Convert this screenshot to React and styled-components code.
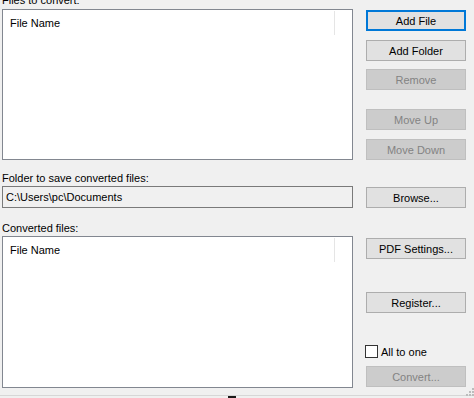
import React from "react";
import styled, { createGlobalStyle } from "styled-components";

const Global = createGlobalStyle`
  html, body { margin: 0; padding: 0; background: #f0f0f0; }
  body { font-family: "Liberation Sans", Arial, sans-serif; font-size: 11px; color: #000; }
`;

const Root = styled.div`
  position: relative;
  width: 474px;
  height: 398px;
  overflow: hidden;
  display: flex;
  flex-direction: column;
  background: #f0f0f0;
`;

const Main = styled.div`
  flex: 1;
  display: flex;
  gap: 13px;
  padding-left: 2px;
`;

const LeftCol = styled.div`
  width: 351px;
  display: flex;
  flex-direction: column;
`;

const RightCol = styled.div`
  width: 100px;
  display: flex;
  flex-direction: column;
`;

const Label = styled.div`
  height: 13px;
  line-height: 13px;
  margin-top: ${(p) => p.$mt}px;
  white-space: nowrap;
`;

const ListBox = styled.div`
  box-sizing: border-box;
  height: ${(p) => p.$h}px;
  margin-top: ${(p) => p.$mt}px;
  background: #fff;
  border: 1px solid #828790;
  padding-top: 1px;
`;

const Header = styled.div`
  display: flex;
  height: 24px;
`;

const HeaderCell = styled.div`
  box-sizing: border-box;
  width: 332px;
  height: 24px;
  line-height: 24px;
  padding-left: 7px;
  border-right: 1px solid #e5e5e5;
`;

const TextBox = styled.div`
  box-sizing: border-box;
  height: 22px;
  margin-top: ${(p) => p.$mt}px;
  border: 1px solid #7a7a7a;
  background: #f0f0f0;
  padding-left: 3px;
  line-height: 20px;
`;

const Button = styled.button`
  box-sizing: border-box;
  width: 100px;
  height: 21px;
  margin: ${(p) => p.$mt}px 0 0 0;
  padding: 0;
  font-family: "Liberation Sans", Arial, sans-serif;
  font-size: 11px;
  color: ${(p) => (p.disabled ? "#838383" : "#000")};
  background: ${(p) => (p.disabled ? "#cccccc" : "#e1e1e1")};
  border: ${(p) =>
    p.$focused ? "2px solid #0078d7" : p.disabled ? "1px solid #bfbfbf" : "1px solid #adadad"};
  border-radius: 0;
  outline: none;
`;

const CheckRow = styled.label`
  display: flex;
  align-items: center;
  height: 13px;
  margin-top: ${(p) => p.$mt}px;
  margin-left: -1px;
  gap: 3px;
`;

const CheckBoxBox = styled.span`
  box-sizing: border-box;
  width: 13px;
  height: 13px;
  border: 1px solid #333;
  background: #fff;
`;

const StatusBar = styled.div`
  height: 2px;
  border-top: 1px solid #d7d7d7;
  display: flex;
`;

const Mark = styled.span`
  width: 8px;
  height: 2px;
  margin-left: 228px;
  background: #1a1a1a;
`;

const Grip = styled.svg`
  position: absolute;
  right: 0;
  bottom: 0;
`;

function FileList({ h, mt }) {
  return (
    <ListBox $h={h} $mt={mt}>
      <Header>
        <HeaderCell>File Name</HeaderCell>
      </Header>
    </ListBox>
  );
}

export default function App() {
  return (
    <Root>
      <Global />
      <Main>
        <LeftCol>
          <Label $mt={-6}>Files to convert:</Label>
          <FileList h={151} mt={2} />
          <Label $mt={12}>Folder to save converted files:</Label>
          <TextBox $mt={1}>C:\Users\pc\Documents</TextBox>
          <Label $mt={14}>Converted files:</Label>
          <FileList h={152} mt={1} />
        </LeftCol>
        <RightCol>
          <Button $mt={10} $focused>Add File</Button>
          <Button $mt={9}>Add Folder</Button>
          <Button $mt={8} disabled>Remove</Button>
          <Button $mt={19} disabled>Move Up</Button>
          <Button $mt={9} disabled>Move Down</Button>
          <Button $mt={27}>Browse...</Button>
          <Button $mt={30}>PDF Settings...</Button>
          <Button $mt={33}>Register...</Button>
          <CheckRow $mt={32}>
            <CheckBoxBox />
            All to one
          </CheckRow>
          <Button $mt={8} disabled>Convert...</Button>
        </RightCol>
      </Main>
      <StatusBar>
        <Mark />
      </StatusBar>
      <Grip width="10" height="10" viewBox="0 0 10 10">
        <g fill="#bcbcbc">
          <rect x="8" y="0" width="2" height="2" />
          <rect x="5" y="3" width="2" height="2" />
          <rect x="8" y="3" width="2" height="2" />
          <rect x="2" y="6" width="2" height="2" />
          <rect x="5" y="6" width="2" height="2" />
          <rect x="8" y="6" width="2" height="2" />
        </g>
      </Grip>
    </Root>
  );
}
